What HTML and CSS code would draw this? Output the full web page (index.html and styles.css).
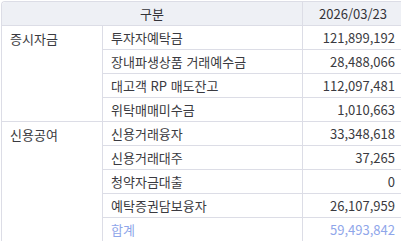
FILE: index.html
```html
<!DOCTYPE html>
<html lang="ko">
<head>
<meta charset="utf-8">
<link rel="stylesheet" href="styles.css">
</head>
<body>
<div class="wrap">
<table class="tbl">
  <colgroup><col class="c1"><col class="c2"><col class="c3"></colgroup>
  <thead>
    <tr><th colspan="2">구분</th><th class="date">2026/03/23</th></tr>
  </thead>
  <tbody>
    <tr><td class="grp" rowspan="4">증시자금</td><td>투자자예탁금</td><td class="num">121,899,192</td></tr>
    <tr><td>장내파생상품 거래예수금</td><td class="num">28,488,066</td></tr>
    <tr><td>대고객 RP 매도잔고</td><td class="num">112,097,481</td></tr>
    <tr><td>위탁매매미수금</td><td class="num">1,010,663</td></tr>
    <tr><td class="grp" rowspan="5">신용공여</td><td>신용거래융자</td><td class="num">33,348,618</td></tr>
    <tr><td>신용거래대주</td><td class="num">37,265</td></tr>
    <tr><td>청약자금대출</td><td class="num">0</td></tr>
    <tr><td>예탁증권담보융자</td><td class="num">26,107,959</td></tr>
    <tr class="total"><td>합계</td><td class="num">59,493,842</td></tr>
  </tbody>
</table>
</div>
</body>
</html>
```
FILE: styles.css
```css
html, body { margin: 0; padding: 0; background: #fff; }
.wrap { padding: 1px 0 0 1px; width: 410px; }
.tbl {
  border-collapse: separate;
  border-spacing: 0;
  table-layout: fixed;
  width: 401px;
  font-family: "Noto Sans CJK KR", "Noto Sans", sans-serif;
  font-size: 13px;
  color: #3a3a40;
  border-top: 1px solid #dcdde6;
  border-left: 1px solid #dcdde6;
  border-top-left-radius: 4px;
}
.c1 { width: 100px; }
.c2 { width: 200px; }
.c3 { width: 101px; }
.tbl th {
  background: #eef0f5;
  font-weight: 400;
  color: #333338;
  height: 23px;
  padding: 0;
  text-align: center;
  border-bottom: 1px solid #dcdde6;
  border-top-left-radius: 4px;
}
.tbl th.date { border-left: 1px solid #dcdde6; border-top-left-radius: 0; padding-left: 0; }
.tbl td {
  height: 23px;
  padding: 0 8px;
  border-bottom: 1px solid #dcdde6;
  vertical-align: middle;
  white-space: nowrap;
}
.tbl td.grp { vertical-align: top; padding-top: 3px; }
.tbl td + td { border-left: 1px solid #dcdde6; }
.tbl tr td:first-child:not(.grp) { border-left: 1px solid #dcdde6; }
.tbl .num { text-align: right; }
.tbl tr.total td { color: #8fa6ea; }
```
